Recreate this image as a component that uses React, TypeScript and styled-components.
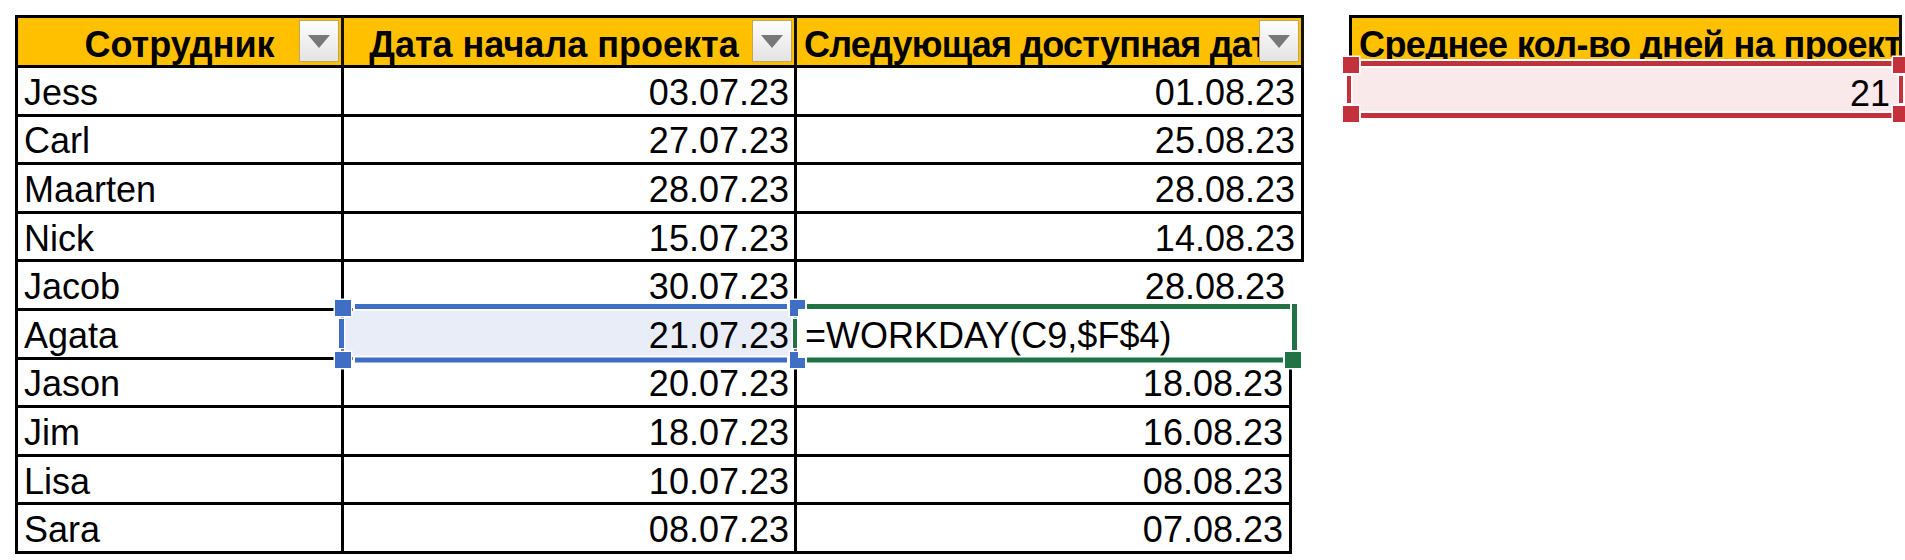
import React from 'react';
import styled, { createGlobalStyle } from 'styled-components';

const GlobalStyle = createGlobalStyle`
  html, body { margin: 0; padding: 0; background: #ffffff; overflow: hidden; }
  body { font-family: "Liberation Sans", Arial, sans-serif; color: #000; }
`;

const COL1 = 329;
const COL2 = 453;
const COL3 = 507;
const COL3_NARROW = 495;
const AVG_W = 553;
const ROW_H = 48.6;

const Page = styled.div`
  position: relative;
  width: 1905px;
  height: 560px;
  box-sizing: border-box;
  padding: 15px 0 0 15px;
  display: flex;
  align-items: flex-start;
  gap: 45px;
`;

const Sheet = styled.div`
  display: flex;
  flex-direction: column;
`;

const HeaderRow = styled.div`
  display: flex;
  height: 53px;
`;

const Row = styled.div`
  display: flex;
  height: ${ROW_H}px;
`;

const HeaderCell = styled.div<{ $w: number; $first?: boolean }>`
  position: relative;
  box-sizing: border-box;
  width: ${(p) => p.$w}px;
  height: 53px;
  background: #ffc000;
  border-top: 3px solid #000;
  border-bottom: 3px solid #000;
  border-right: 3px solid #111;
  border-left: ${(p) => (p.$first ? '3px solid #000' : 'none')};
  display: flex;
  align-items: center;
  padding-top: 6px;
  overflow: hidden;
`;

const HeaderLabel = styled.span<{
  $align: 'center' | 'left';
  $padL?: number;
  $padR?: number;
  $tight?: number;
}>`
  flex: 1;
  min-width: 0;
  overflow: hidden;
  white-space: nowrap;
  text-align: ${(p) => p.$align};
  padding-left: ${(p) => p.$padL ?? 0}px;
  padding-right: ${(p) => p.$padR ?? 0}px;
  letter-spacing: ${(p) => (p.$tight ? `-${p.$tight}px` : 'normal')};
  font-size: 36px;
  font-weight: 700;
  color: #000;
`;

const FilterButton = styled.div`
  position: absolute;
  right: 2px;
  top: 2px;
  width: 40px;
  height: 42px;
  box-sizing: border-box;
  border: 1px solid #c2a55c;
  background: linear-gradient(#fdfdfd, #e3e3e3);
  display: flex;
  align-items: center;
  justify-content: center;
`;

const Cell = styled.div<{
  $w: number;
  $first?: boolean;
  $noRight?: boolean;
  $align: 'left' | 'right';
  $bg?: string;
  $padL?: number;
  $padR?: number;
}>`
  box-sizing: border-box;
  width: ${(p) => p.$w}px;
  height: 100%;
  background: ${(p) => p.$bg ?? '#ffffff'};
  border-bottom: 3px solid #000;
  border-right: 3px solid ${(p) => (p.$noRight ? 'transparent' : '#000')};
  border-left: ${(p) => (p.$first ? '3px solid #000' : 'none')};
  display: flex;
  align-items: center;
  justify-content: ${(p) => (p.$align === 'left' ? 'flex-start' : 'flex-end')};
  padding: 4px ${(p) => p.$padR ?? 5}px 0 ${(p) => p.$padL ?? 6}px;
  font-size: 36px;
  white-space: nowrap;
  overflow: hidden;
`;

const AvgBlock = styled.div`
  display: flex;
  flex-direction: column;
  width: ${AVG_W}px;
`;

const ValueCell = styled.div`
  box-sizing: border-box;
  margin: 0 3px;
  height: ${ROW_H}px;
  background: #f9e9eb;
  display: flex;
  align-items: center;
  justify-content: flex-end;
  padding: 4px 9px 0 0;
  font-size: 36px;
`;

const Overlay = styled.svg`
  position: absolute;
  left: 0;
  top: 0;
  pointer-events: none;
`;

const FilterIcon = () => (
  <svg width="22" height="13" viewBox="0 0 22 13">
    <polygon points="0,0 22,0 11,13" fill="#787878" />
  </svg>
);

type Rect = [number, number, number, number];

const Seg = ({ r, color, outline = 2 }: { r: Rect; color: string; outline?: number }) => {
  const [x1, y1, x2, y2] = r;
  return (
    <g>
      <rect x={x1 - outline} y={y1 - outline} width={x2 - x1 + outline * 2} height={y2 - y1 + outline * 2} fill="#ffffff" />
      <rect x={x1} y={y1} width={x2 - x1} height={y2 - y1} fill={color} />
    </g>
  );
};

const BLUE = '#3f6fc4';
const GREEN = '#217346';
const RED = '#c3323c';

const Selections = () => (
  <Overlay width={1905} height={560} viewBox="0 0 1905 560">
    {/* editing cell (green) */}
    <Seg r={[807, 304, 1297, 309]} color={GREEN} />
    <Seg r={[1292, 304, 1297, 350]} color={GREEN} />
    <Seg r={[807, 357.5, 1283, 362.5]} color={GREEN} />
    <Seg r={[793, 319, 797, 348]} color={GREEN} outline={1.5} />
    <Seg r={[1285, 352, 1301, 368]} color={GREEN} outline={1.5} />
    <rect x={1292} y={309} width={5} height={41} fill={GREEN} />
    {/* referenced cell (blue) */}
    <Seg r={[355, 304, 787, 309]} color={BLUE} />
    <Seg r={[355, 357.5, 787, 362.5]} color={BLUE} />
    <Seg r={[339, 319, 344, 348]} color={BLUE} outline={1.5} />
    <Seg r={[335, 300, 351, 316]} color={BLUE} outline={1.5} />
    <Seg r={[335, 352, 351, 368]} color={BLUE} outline={1.5} />
    <Seg r={[790, 300, 805, 316]} color={BLUE} outline={1.5} />
    <rect x={798} y={309} width={7} height={7} fill="#ffffff" />
    <Seg r={[790, 352, 805, 368]} color={BLUE} outline={1.5} />
    <rect x={798} y={352} width={7} height={6} fill="#ffffff" />
    {/* referenced cell (red) */}
    <Seg r={[1361, 61, 1892, 66]} color={RED} />
    <Seg r={[1361, 113, 1892, 118]} color={RED} />
    <Seg r={[1347, 76, 1351, 103]} color={RED} outline={1.5} />
    <Seg r={[1899, 76, 1903, 103]} color={RED} outline={1.5} />
    <Seg r={[1343, 57, 1359, 73]} color={RED} outline={1.5} />
    <Seg r={[1343, 106, 1359, 122]} color={RED} outline={1.5} />
    <Seg r={[1893, 57, 1909, 73]} color={RED} outline={1.5} />
    <Seg r={[1893, 106, 1909, 122]} color={RED} outline={1.5} />
  </Overlay>
);

const rows: [string, string, string][] = [
  ['Jess', '03.07.23', '01.08.23'],
  ['Carl', '27.07.23', '25.08.23'],
  ['Maarten', '28.07.23', '28.08.23'],
  ['Nick', '15.07.23', '14.08.23'],
  ['Jacob', '30.07.23', '28.08.23'],
  ['Agata', '21.07.23', '=WORKDAY(C9,$F$4)'],
  ['Jason', '20.07.23', '18.08.23'],
  ['Jim', '18.07.23', '16.08.23'],
  ['Lisa', '10.07.23', '08.08.23'],
  ['Sara', '08.07.23', '07.08.23'],
];

export default function App() {
  return (
    <>
      <GlobalStyle />
      <Page>
        <Sheet>
          <HeaderRow>
            <HeaderCell $w={COL1} $first>
              <HeaderLabel $align="center">Сотрудник</HeaderLabel>
              <FilterButton><FilterIcon /></FilterButton>
            </HeaderCell>
            <HeaderCell $w={COL2}>
              <HeaderLabel $align="center" $padR={30}>Дата начала проекта</HeaderLabel>
              <FilterButton><FilterIcon /></FilterButton>
            </HeaderCell>
            <HeaderCell $w={COL3}>
              <HeaderLabel $align="left" $padL={7} $tight={0.8}>Следующая доступная дата</HeaderLabel>
              <FilterButton><FilterIcon /></FilterButton>
            </HeaderCell>
          </HeaderRow>
          {rows.map(([name, start, next], i) => {
            const lower = i >= 4;
            const isFormula = i === 5;
            return (
              <Row key={name}>
                <Cell $w={COL1} $first $align="left">{name}</Cell>
                <Cell $w={COL2} $align="right" $bg={isFormula ? '#e8edf8' : undefined}>{start}</Cell>
                <Cell
                  $w={lower ? COL3_NARROW : COL3}
                  $align={isFormula ? 'left' : 'right'}
                  $padL={isFormula ? 8 : 6}
                  $padR={i === 4 ? 4 : 6}
                  $noRight={i === 4 || isFormula}
                >
                  {next}
                </Cell>
              </Row>
            );
          })}
        </Sheet>
        <AvgBlock>
          <HeaderCell $w={AVG_W} $first>
            <HeaderLabel $align="left" $padL={7} $tight={0.6}>Среднее кол-во дней на проект</HeaderLabel>
          </HeaderCell>
          <ValueCell>21</ValueCell>
        </AvgBlock>
        <Selections />
      </Page>
    </>
  );
}
